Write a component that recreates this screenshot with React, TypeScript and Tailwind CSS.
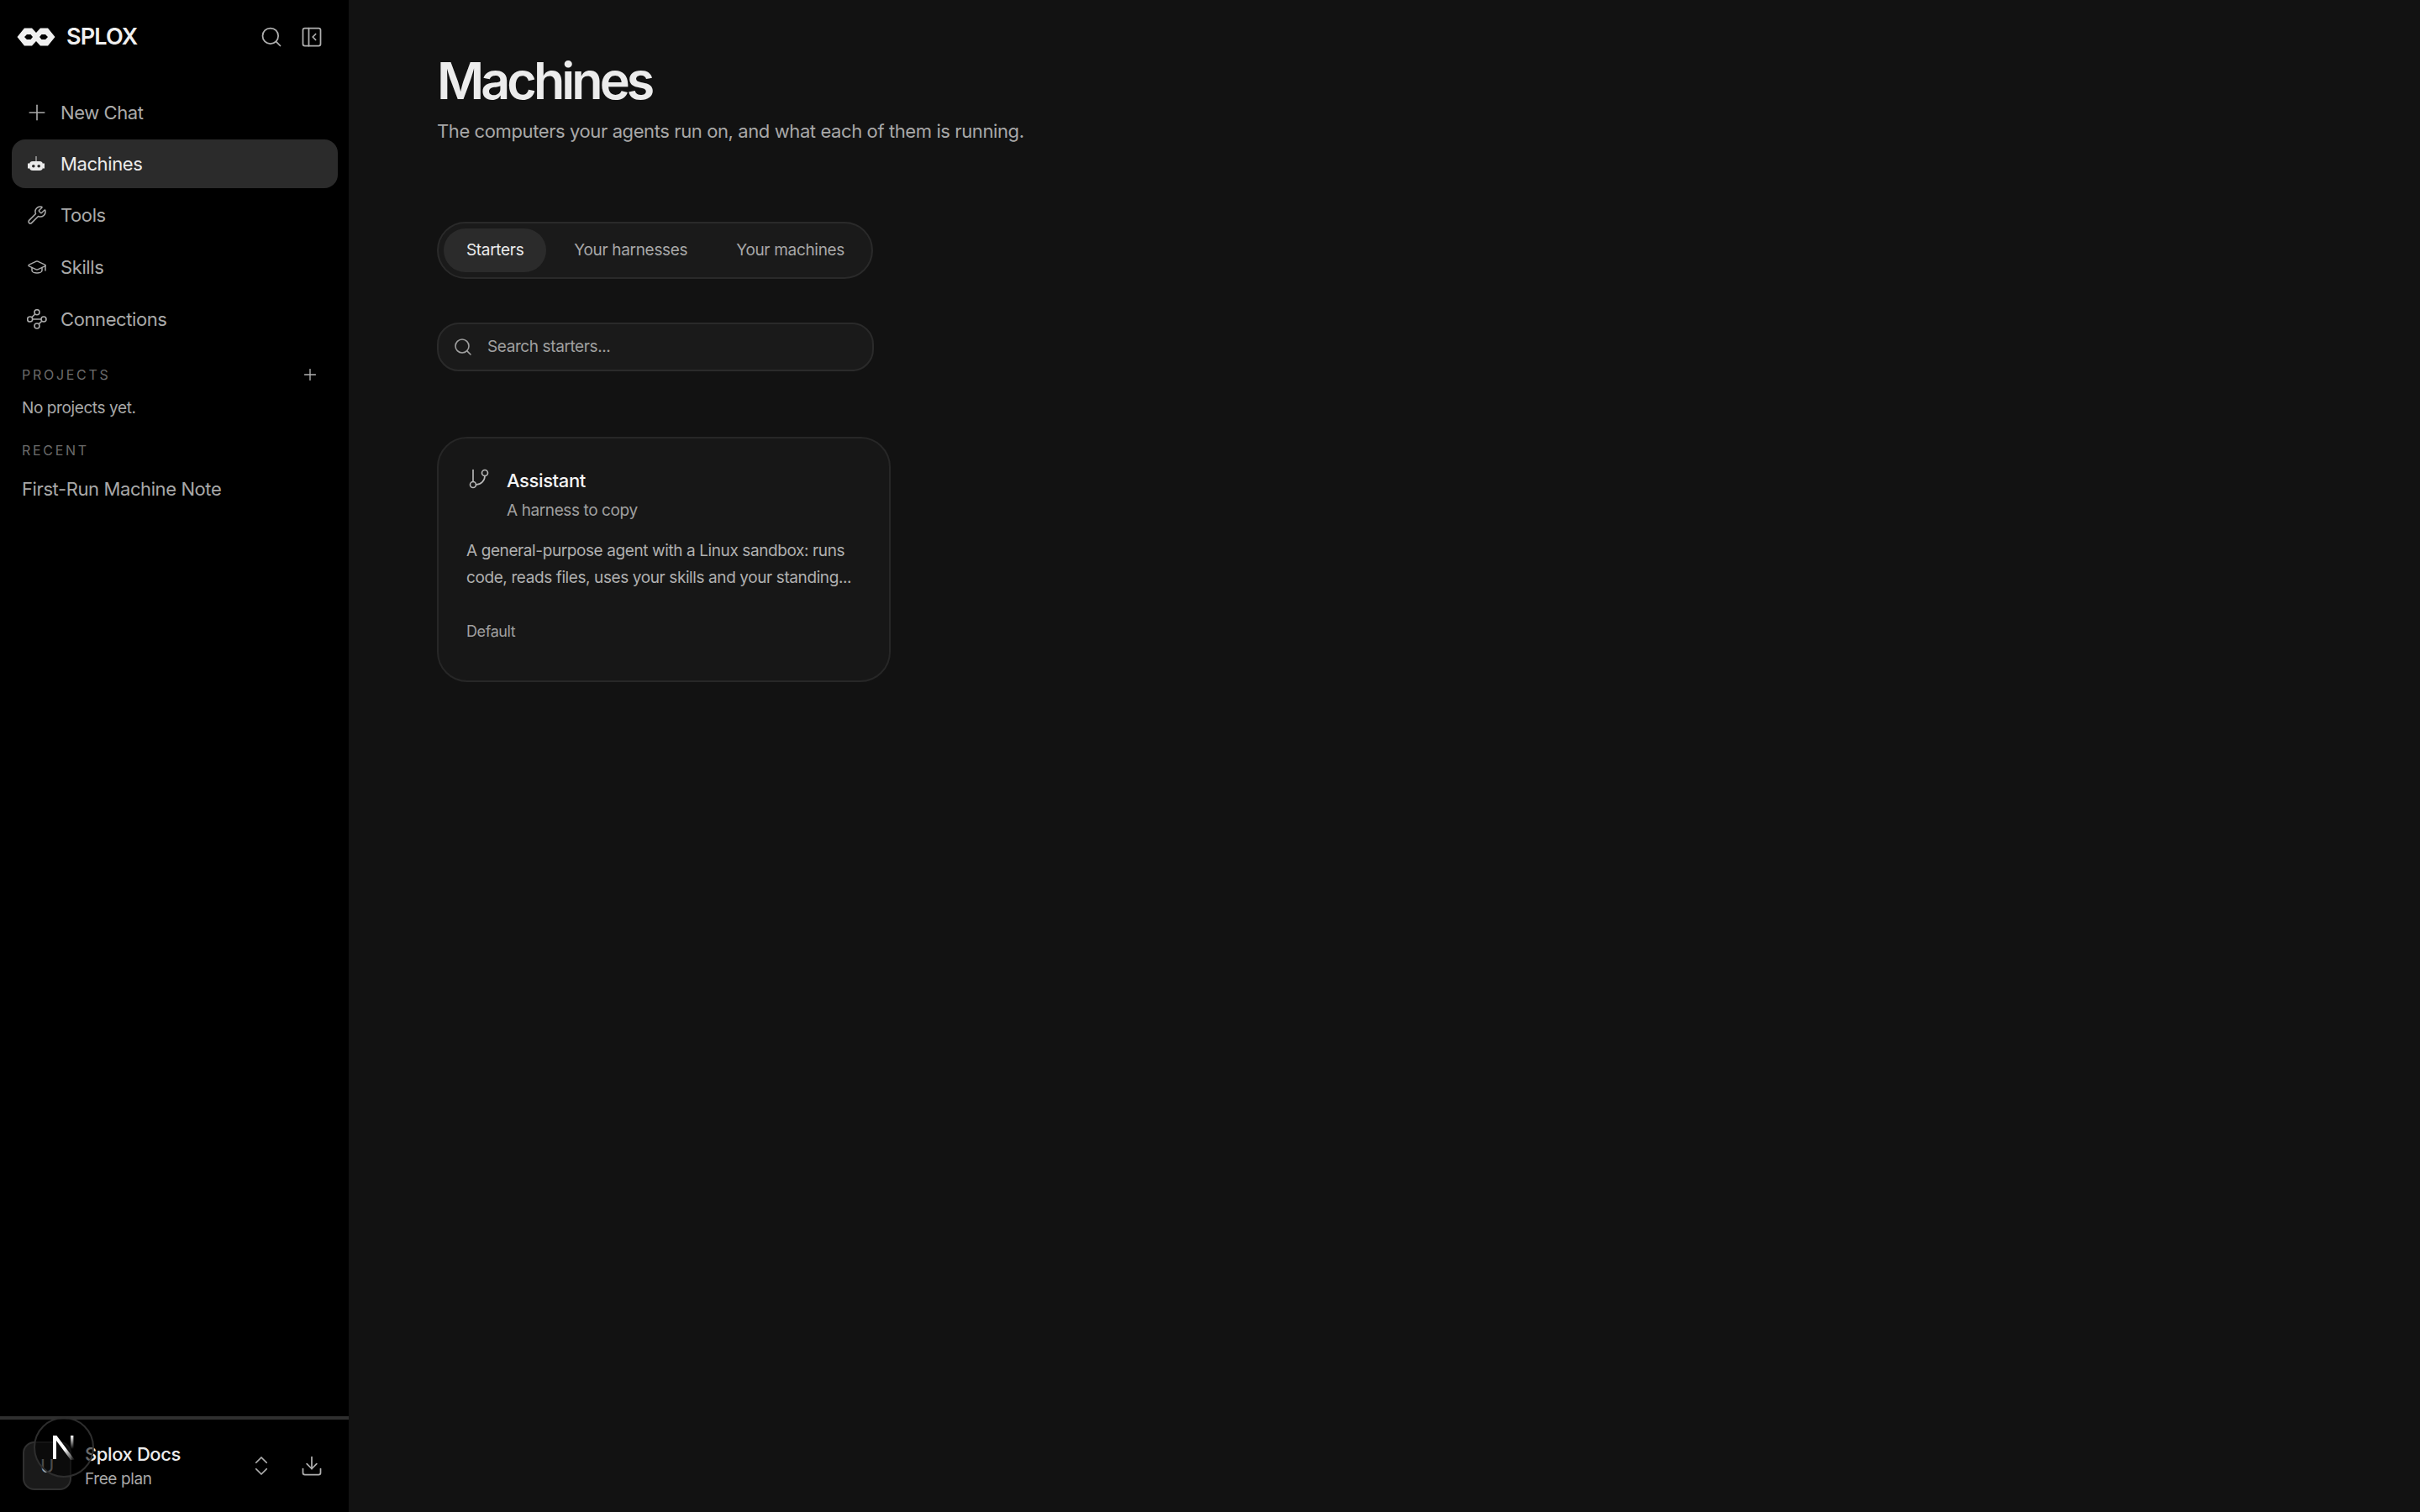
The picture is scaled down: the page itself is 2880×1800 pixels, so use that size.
import { ChevronsUpDown, Download, GitBranch, GraduationCap, PanelLeftClose, Plus, Search, Wrench } from 'lucide-react';

function SploxLogo() {
  return (
    <svg viewBox="0 0 46 24" className="w-[46px] h-[24px]" fill="currentColor" fillRule="evenodd">
      <path d="M0.5 12 9 1.5H18L23 7 28 1.5H37L45.5 12 37 22.5H28L23 17 18 22.5H9ZM9 12 12 9H16.5L19 12 16.5 15H12ZM27 12 29.5 9H34L37 12 34 15H29.5Z" />
    </svg>
  );
}

function BotSolid() {
  return (
    <svg viewBox="0 0 20 18" className="w-[20px] h-[18px]">
      <rect x="9.2" y="0" width="1.6" height="6" fill="#9a9a9a" />
      <rect x="2" y="6" width="16" height="11" rx="4" fill="currentColor" />
      <rect x="0" y="8.5" width="2" height="6" fill="currentColor" />
      <rect x="18" y="8.5" width="2" height="6" fill="currentColor" />
      <circle cx="6.8" cy="11.7" r="1.8" fill="#2b2b2b" />
      <circle cx="13.2" cy="11.7" r="1.8" fill="#2b2b2b" />
    </svg>
  );
}

function ConnectionsIcon() {
  return (
    <svg viewBox="0 0 24 24" className="w-[24px] h-[24px]" fill="none" stroke="currentColor" strokeWidth="1.6">
      <circle cx="12" cy="3.7" r="3" />
      <circle cx="3.7" cy="12" r="3" />
      <circle cx="20" cy="12" r="3" />
      <circle cx="12" cy="20" r="3" />
      <path d="M6.7 12h10.3M9.9 5.8 5.8 9.9M14.1 17.9l4-3.9" />
    </svg>
  );
}

const navItems = [
  { label: 'Tools', icon: <Wrench size={28} strokeWidth={1.5} /> },
  { label: 'Skills', icon: <GraduationCap size={28} strokeWidth={1.5} /> },
  { label: 'Connections', icon: <ConnectionsIcon /> },
];

export default function App() {
  return (
    <div className="flex h-screen bg-[#121212] text-[#ececec] font-['Inter',sans-serif] tracking-[-0.4px] overflow-hidden">
      {/* Sidebar */}
      <aside className="relative flex flex-col w-[415px] shrink-0 bg-black">
        <div className="flex items-center justify-between h-[88px] pl-[20px] pr-[30px]">
          <div className="flex items-center gap-[13px] text-[#f0f0f0]">
            <SploxLogo />
            <span className="text-[27px] font-semibold tracking-[-0.03em]">SPLOX</span>
          </div>
          <div className="flex items-center gap-[20px] text-[#b0b0b0]">
            <Search size={28} strokeWidth={1.5} />
            <PanelLeftClose size={28} strokeWidth={1.5} />
          </div>
        </div>

        <nav className="flex flex-col pl-[14px] pr-[13px]">
          <div className="flex items-center gap-[16px] h-[58px] mt-[17px] pl-[18px] text-[#aaaaaa]">
            <span className="flex items-center justify-center w-[24px] h-[24px]">
              <Plus size={30} strokeWidth={1.3} className="shrink-0" />
            </span>
            <span className="text-[22px]">New Chat</span>
          </div>
          <div className="flex items-center gap-[19px] h-[58px] mt-[3px] pl-[19px] rounded-[16px] bg-[#2b2b2b] text-[#ececec]">
            <BotSolid />
            <span className="text-[22px]">Machines</span>
          </div>
          <div className="flex flex-col gap-[4px] mt-[3px]">
            {navItems.map((item) => (
              <div key={item.label} className="flex items-center gap-[16px] h-[58px] pl-[18px] text-[#aaaaaa]">
                <span className="flex items-center justify-center w-[24px] h-[24px]">{item.icon}</span>
                <span className="text-[22px]">{item.label}</span>
              </div>
            ))}
          </div>
        </nav>

        <div className="flex items-center justify-between pl-[26px] pr-[35px] mt-[27px] h-[20px]">
          <span className="text-[16px] tracking-[0.17em] text-[#6b6b6b]">PROJECTS</span>
          <Plus size={22} strokeWidth={1.5} className="text-[#b0b0b0]" />
        </div>
        <div className="pl-[26px] mt-[16px] text-[19px] leading-[28px] text-[#a8a8a8]">No projects yet.</div>
        <div className="pl-[26px] mt-[24px] h-[20px] text-[16px] tracking-[0.17em] text-[#6b6b6b]">RECENT</div>
        <div className="pl-[26px] mt-[22px] text-[22px] leading-[32px] text-[#a8a8a8]">First-Run Machine Note</div>

        {/* Footer */}
        <div className="mt-auto flex items-center h-[114px] border-t-4 border-[#2f2f2f] pl-[27px] pr-[30px]">
          <div className="flex items-center justify-center w-[58px] h-[58px] rounded-[14px] bg-[#1a1a1a] border-2 border-[#303030] text-[#aaaaaa] text-[22px]">U</div>
          <div className="ml-[16px] flex flex-col">
            <span className="text-[22px] leading-[30px] font-medium text-[#ececec]">Splox Docs</span>
            <span className="mt-[2px] text-[19px] leading-[26px] text-[#a8a8a8]">Free plan</span>
          </div>
          <ChevronsUpDown size={30} strokeWidth={1.4} className="ml-auto text-[#b0b0b0]" />
          <Download size={28} strokeWidth={1.5} className="ml-[31px] text-[#b0b0b0]" />
        </div>

        {/* Next.js dev badge */}
        <div className="absolute left-[40px] top-[1687px] flex items-center justify-center w-[72px] h-[72px] rounded-full bg-black/55 border-2 border-[#2e2e2e]">
          <svg viewBox="0 0 32 32" className="w-[32px] h-[32px]" fill="none">
            <defs>
              <linearGradient id="nfade" x1="0" y1="0" x2="1" y2="1">
                <stop offset="0.55" stopColor="#ffffff" />
                <stop offset="1" stopColor="#ffffff" stopOpacity="0" />
              </linearGradient>
              <linearGradient id="nbar" x1="0" y1="0" x2="0" y2="1">
                <stop offset="0" stopColor="#ffffff" />
                <stop offset="0.8" stopColor="#ffffff" stopOpacity="0" />
              </linearGradient>
            </defs>
            <path d="M3 2h4.4L29 31h-5L7 8v22H3z" fill="url(#nfade)" />
            <rect x="24" y="2" width="3.4" height="20" fill="url(#nbar)" />
          </svg>
        </div>
      </aside>

      {/* Main */}
      <main className="flex-1 pl-[105px] pt-[56px]">
        <h1 className="text-[61px] leading-[80px] font-semibold tracking-[-0.065em] text-[#ececec]">Machines</h1>
        <p className="mt-[4px] text-[22px] leading-[32px] text-[#a8a8a8]">The computers your agents run on, and what each of them is running.</p>

        <div className="mt-[92px] inline-flex items-center h-[68px] px-[6px] gap-[6px] rounded-full bg-[#1a1a1a] border-2 border-[#2a2a2a] tracking-[-0.02em]">
          <div className="flex items-center h-[52px] px-[27px] rounded-full bg-[#2b2b2b] text-[19px] text-[#ececec]">Starters</div>
          <div className="flex items-center h-[52px] pl-[27px] pr-[26px] rounded-full text-[19px] text-[#a8a8a8]">Your harnesses</div>
          <div className="flex items-center h-[52px] pl-[26px] pr-[26px] rounded-full text-[19px] text-[#a8a8a8]">Your machines</div>
        </div>

        <div className="mt-[52px] flex items-center w-[520px] h-[58px] pl-[17px] gap-[17px] rounded-[26px] bg-[#1a1a1a] border-2 border-[#2a2a2a] text-[#a0a0a0]">
          <Search size={24} strokeWidth={1.6} />
          <span className="pt-[1px] text-[19px]">Search starters...</span>
        </div>

        <div className="mt-[78px] w-[540px] h-[292px] pl-[33px] pt-[34px] rounded-[36px] bg-[#171717] border-2 border-[#272727]">
          <div className="flex">
            <GitBranch size={28} strokeWidth={1.4} className="ml-[1px] text-[#b8b8b8]" />
            <div className="ml-[19px] flex flex-col">
              <span className="text-[22px] leading-[32px] font-medium text-[#f5f5f5]">Assistant</span>
              <span className="mt-[6px] text-[19px] leading-[28px] text-[#a0a0a0]">A harness to copy</span>
            </div>
          </div>
          <p className="mt-[18px] text-[19px] leading-[32px] text-[#b0b0b0] whitespace-nowrap">
            A general-purpose agent with a Linux sandbox: runs<br />code, reads files, uses your skills and your standing...
          </p>
          <div className="mt-[36px] text-[18px] leading-[24px] text-[#a0a0a0]">Default</div>
        </div>
      </main>
    </div>
  );
}
